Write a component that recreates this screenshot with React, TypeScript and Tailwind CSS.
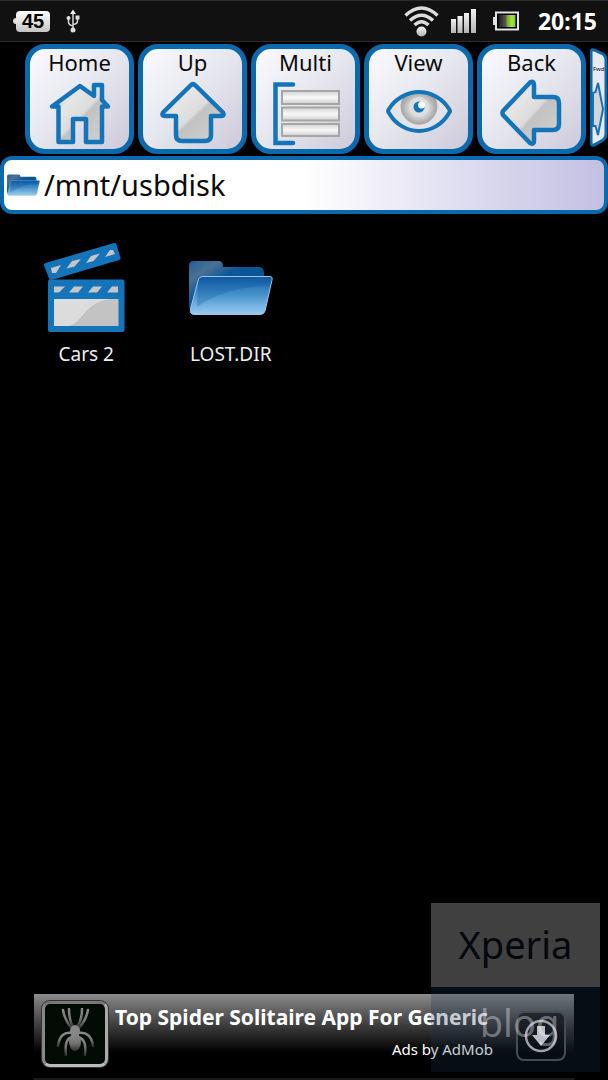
import { ReactNode, useState } from 'react'

interface ToolProps {
  title: string
  icon: ReactNode
}

interface EntryProps {
  name: string
  icon: ReactNode
}

// gradients shared by all icons on the page
function IconDefs() {
  return (
    <svg className="absolute h-0 w-0" aria-hidden="true">
      <defs>
        <linearGradient id="steel" x1="0" y1="0" x2="1" y2="1">
          <stop offset="0" stopColor="#bdbdbd" />
          <stop offset="0.3" stopColor="#e6e6e6" />
          <stop offset="0.52" stopColor="#dcdcdc" />
          <stop offset="0.56" stopColor="#c2c2c2" />
          <stop offset="1" stopColor="#d2d2d4" />
        </linearGradient>
        <linearGradient id="bar" x1="0" y1="0" x2="0" y2="1">
          <stop offset="0" stopColor="#d2d2d2" />
          <stop offset="0.5" stopColor="#f8f8f8" />
          <stop offset="1" stopColor="#cfcfcf" />
        </linearGradient>
        <radialGradient id="iris">
          <stop offset="0" stopColor="#f2f2f2" />
          <stop offset="0.6" stopColor="#d0d0d0" />
          <stop offset="1" stopColor="#a3a3a3" />
        </radialGradient>
        <linearGradient id="folderBack" x1="0" y1="0" x2="1" y2="1">
          <stop offset="0" stopColor="#1f5f9a" />
          <stop offset="0.2" stopColor="#4b7093" />
          <stop offset="0.4" stopColor="#0b5799" />
          <stop offset="1" stopColor="#0a4d8c" />
        </linearGradient>
        <linearGradient id="folderFront" x1="0" y1="0" x2="0" y2="1">
          <stop offset="0" stopColor="#0e5ba3" />
          <stop offset="0.5" stopColor="#4a94cd" />
          <stop offset="1" stopColor="#9accf0" />
        </linearGradient>
        <linearGradient id="silver" x1="0" y1="0" x2="0" y2="1">
          <stop offset="0" stopColor="#f4f4f4" />
          <stop offset="1" stopColor="#b4b4b4" />
        </linearGradient>
        <linearGradient id="charge" x1="0" y1="0" x2="1" y2="0">
          <stop offset="0" stopColor="#1c1c1c" />
          <stop offset="0.45" stopColor="#5a5a5a" />
          <stop offset="0.5" stopColor="#6fae1c" />
          <stop offset="0.8" stopColor="#a5e344" />
          <stop offset="1" stopColor="#7fc222" />
        </linearGradient>
        <linearGradient id="spider" x1="0" y1="0" x2="0" y2="1">
          <stop offset="0" stopColor="#8a8a8a" />
          <stop offset="0.55" stopColor="#757575" />
          <stop offset="1" stopColor="#333" />
        </linearGradient>
      </defs>
    </svg>
  )
}

function HomeIcon() {
  return (
    <svg viewBox="0 0 68 68" className="size-[68px]" fill="url(#steel)" stroke="#1474ba" strokeWidth="4.500" strokeLinejoin="round">
      <path d="M34 7 6 27.500H12.500V63H27V40H40V63H56V27.500H62L56 21V6H48V17Z" />
    </svg>
  )
}

function UpIcon() {
  return (
    <svg viewBox="0 0 68 68" className="size-[68px]" fill="url(#steel)" stroke="#1474ba" strokeWidth="4.500" strokeLinejoin="round">
      <path d="M31.500 6.500Q34 4 36.500 6.500L64 33.500Q66 37 62 37H52V56Q52 62 46 62H23Q17 62 17 56V37H6Q2 37 4 33.500Z" />
    </svg>
  )
}

function MultiIcon() {
  return (
    <svg viewBox="0 0 68 68" className="size-[68px]">
      <path d="M21 5.500H3.500V64H21" fill="none" stroke="#1474ba" strokeWidth="4.500" strokeLinecap="round" />
      <g fill="url(#bar)" stroke="#a6a6a6" strokeWidth="2">
        <rect x="10" y="12" width="57" height="13" />
        <rect x="10" y="28.500" width="57" height="13" />
        <rect x="10" y="45" width="57" height="12" />
      </g>
    </svg>
  )
}

function ViewIcon() {
  return (
    <svg viewBox="0 0 68 68" className="size-[68px]">
      <path d="M4 32C10 21 21 13 34 13S58 21 64 32C58 45 47 52 34 52S10 45 4 32Z" fill="#e4e4e8" />
      <path d="M18 19Q26 13 34 13T50 19A18 18 0 1 1 18 19Z" fill="url(#iris)" stroke="#aaa" />
      <circle cx="34" cy="28" r="10" fill="#dedede" />
      <circle cx="34" cy="28" r="5.500" fill="#1474ba" />
      <circle cx="36.500" cy="26" r="3.500" fill="#fff" />
      <path d="M4 34Q2 32 4 30C10 20 22 13 34 13S58 20 64 30Q66 32 64 34C58 45 46 52 34 52S10 45 4 34Z" fill="none" stroke="#1474ba" strokeWidth="4" />
    </svg>
  )
}

function BackIcon() {
  return (
    <svg viewBox="0 0 68 68" className="size-[68px]" fill="url(#steel)" stroke="#1474ba" strokeWidth="4.500" strokeLinejoin="round">
      <path d="M32 3.500 5 32Q4 34 5 36L32 64Q36 66 36 62V51H55Q61 51 61 45V24Q61 18 55 18H36V6Q36 1 32 3.500Z" />
    </svg>
  )
}

function ClapperIcon() {
  return (
    <svg viewBox="0 0 84 92" className="h-[92px] w-[84px]">
      <g fill="#1474ba" stroke="#1474ba" strokeWidth="4" strokeLinejoin="round">
        <path d="M2 23 70.500 3 74.500 16 7 36Z" />
        <path d="M6 39.500H78.500V88H6Z" />
      </g>
      <g fill="#c6c6c6">
        <path d="M7 26 17 23 12 31H8Z" />
        <path d="M22.500 26.500 28 19 37 17 30.500 24.500Z" />
        <path d="M42 21 47 14 56 11.500 49.500 19Z" />
        <path d="M61 15 66 8H69L71 12Z" />
        <path d="M10 44.500H21L15 50.500H10Z" />
        <path d="M30 44.500H39L34 50.500H25Z" />
        <path d="M49 44.500H58L53 50.500H44Z" />
        <path d="M68 44.500H74V50.500H63Z" />
      </g>
      <rect x="10" y="57" width="64.500" height="27" fill="#c3c3c3" />
      <path d="M10 57H67C41 60 41 77 26 84H10Z" fill="#dcdcdc" />
    </svg>
  )
}

function FolderIcon({ className }: { className: string }) {
  return (
    <svg viewBox="0 0 84 56" className={className}>
      <path d="M0 6Q0 1 5 1H30Q34 1 34 7H70Q75 7 75 13V50H4Q0 50 0 46Z" fill="url(#folderBack)" />
      <path d="M14 16.500H81Q84 16.500 83 20L76 51Q75 54.500 71 54.500H5Q.5 54 1.500 49L9 21Q10 16.500 14 16.500Z" fill="url(#folderFront)" stroke="#9cc6e8" strokeWidth="1" />
      <path d="M14 17H81Q84 17 82.500 21L81 26Q38 26 8 47L9.500 21Q10 17 14 17Z" fill="#084f96" opacity=".25" />
    </svg>
  )
}

function SpiderIcon() {
  return (
    <svg viewBox="0 0 56 52" className="h-[52px] w-[56px]">
      <g fill="none" stroke="url(#spider)" strokeWidth="2.500" strokeLinecap="round">
        <path d="M25 21Q18 13 16 2" />
        <path d="M26 19Q22 12 22 1" />
        <path d="M31 21Q39 13 41 2" />
        <path d="M30 19Q35 12 35 1" />
        <path d="M25 25Q13 23 11 38" />
        <path d="M25 29Q17 31 19 47" />
        <path d="M31 25Q44 23 46 38" />
        <path d="M31 29Q40 31 38 47" />
      </g>
      <ellipse cx="28" cy="23" rx="5" ry="6" fill="#888" />
      <ellipse cx="28" cy="34" rx="6" ry="9" fill="url(#spider)" />
    </svg>
  )
}

function StatusBar() {
  return (
    <header className="flex h-[42px] items-center border-y border-[#2b2b2b] bg-[#111] pr-[11px] pl-[13px]">
      <div className="flex items-center">
        <span className="h-[6px] w-[3px] rounded-l-sm bg-[#ddd]" />
        <span className="flex h-[21px] w-[34px] items-center justify-center rounded-sm bg-linear-to-b from-white to-[#c4c4c4] font-['Liberation_Sans'] text-[20px] font-bold text-black">
          45
        </span>
      </div>
      <svg viewBox="0 0 14 24" className="ml-4 h-6 w-[14px]" fill="none" stroke="#d5d5d5" strokeWidth="1.500">
        <path d="M7 3V20M2.500 9V13Q2.500 16 7 17M11.500 9V12Q11.500 15 7 15.500" />
        <path d="M7 .5 10 5H4Z" fill="#eee" stroke="none" />
        <circle cx="7" cy="21" r="2.500" fill="#ddd" stroke="none" />
        <circle cx="2.500" cy="9" r="2" fill="#ddd" stroke="none" />
        <path d="M9.500 6.500H13.500V10.500H9.500Z" fill="#ddd" stroke="none" />
      </svg>

      <div className="ml-auto flex items-center gap-3">
        <svg viewBox="0 0 35 34" className="h-[34px] w-[35px]" fill="none" stroke="#dcdcdc" strokeWidth="3.500">
          <path d="M1.500 11.500Q17.500-3.500 33.500 11.500" />
          <path d="M6 16.500Q17.500 6 29 16.500" />
          <path d="M10.500 21Q17.500 14.500 24.500 21" />
          <circle cx="17.500" cy="27.500" r="5" fill="url(#silver)" stroke="none" />
        </svg>
        <svg viewBox="0 0 30 26" className="h-[26px] w-[30px]" fill="url(#silver)">
          <rect x="0" y="11" width="5" height="14" />
          <rect x="6.500" y="8" width="5" height="17" />
          <rect x="13" y="5" width="5" height="20" />
          <rect x="20" y="1" width="5" height="24" />
        </svg>
        <svg viewBox="0 0 33 20" className="h-5 w-[33px]">
          <rect x="0" y="6" width="2" height="8" fill="#ddd" />
          <rect x="3" y="1.500" width="22" height="17" fill="#000" stroke="#e4e4e4" strokeWidth="2" />
          <rect x="5.500" y="4" width="17" height="12" fill="url(#charge)" />
        </svg>
        <time className="text-[23px] leading-6 font-bold text-white">20:15</time>
      </div>
    </header>
  )
}

function ToolButton({ title, icon }: ToolProps) {
  return (
    <button
      type="button"
      className="flex h-[110px] w-[109px] shrink-0 flex-col items-center gap-1 rounded-[20px] border-[5px] border-[#0b69ae] bg-linear-to-br from-[#fafaff] via-[#e6e6ee] to-[#cdcada] text-[22px] leading-[26px] text-[#0b0b0b]"
    >
      {title}
      {icon}
    </button>
  )
}

// next tool, seen edge-on while it turns into view
function TurnedTool() {
  return (
    <button type="button" className="relative h-[104px] w-5 shrink-0 text-[6px] leading-3 text-black">
      <svg viewBox="0 0 20 104" className="absolute inset-0 h-[104px] w-5">
        <path d="M1 5Q1 2 4 3L13 7Q16 9 16 14V86Q16 91 13 93L4 98Q1 99 1 95Z" fill="#e9e9f1" stroke="#0b69ae" strokeWidth="3" />
        <path d="M3 46 5.500 45 8 36 13 62 8 88 5.500 79 3 79Z" fill="#d5d5d5" stroke="#1474ba" strokeWidth="2" />
      </svg>
      <span className="absolute top-4 left-[3px]">Fwd</span>
    </button>
  )
}

function Entry({ name, icon }: EntryProps) {
  return (
    <li>
      <button type="button" className="flex w-full flex-col items-center text-[19px] leading-6 text-[#eee]">
        <span className="mb-2 flex h-[92px] items-center">{icon}</span>
        {name}
      </button>
    </li>
  )
}

function AdBanner() {
  return (
    <a
      href="#ad"
      className="mx-auto flex h-[86px] w-full max-w-[540px] items-start border-b-2 border-[#1a1a1a] bg-linear-to-b from-[#8c8c8c] via-[#1c1c1c] via-55% to-black to-80% px-2 pt-[7px] text-white"
    >
      <span className="flex size-[66px] shrink-0 items-center justify-center rounded-lg border-[3px] border-t-[#777] border-r-[#aaa] border-b-[#bbb] border-l-[#888] bg-[#030b05] ring-1 ring-[#333]">
        <SpiderIcon />
      </span>
      <span className="ml-[7px] flex w-[378px] flex-col">
        <span className="text-[21px] leading-8 font-bold whitespace-nowrap">Top Spider Solitaire App For Generic</span>
        <span className="text-right text-[15px] leading-8">Ads by AdMob</span>
      </span>
      <span className="mt-[10px] ml-auto flex size-[50px] shrink-0 items-center justify-center rounded-lg border-2 border-[#555] bg-black/60">
        <svg viewBox="0 0 34 34" className="size-[34px]">
          <circle cx="17" cy="17" r="15" fill="none" stroke="#c9c9c9" strokeWidth="2.500" />
          <path d="M13 7H21V16H26L17 27 8 16H13Z" fill="#ececec" />
        </svg>
      </span>
    </a>
  )
}

export default function App() {
  const [path, setPath] = useState('/mnt/usbdisk')

  const tools: ToolProps[] = [
    { title: 'Home', icon: <HomeIcon /> },
    { title: 'Up', icon: <UpIcon /> },
    { title: 'Multi', icon: <MultiIcon /> },
    { title: 'View', icon: <ViewIcon /> },
    { title: 'Back', icon: <BackIcon /> }
  ]

  const entries: EntryProps[] = [
    { name: 'Cars 2', icon: <ClapperIcon /> },
    { name: 'LOST.DIR', icon: <FolderIcon className="h-14 w-[84px]" /> }
  ]

  return (
    <div className="relative flex min-h-screen flex-col overflow-hidden bg-black font-['Noto_Sans',sans-serif]">
      <IconDefs />
      <StatusBar />

      <nav className="flex items-center gap-1 overflow-hidden py-[2px] pl-[25px]">
        {tools.map((tool) => (
          <ToolButton key={tool.title} {...tool} />
        ))}
        <TurnedTool />
      </nav>

      <label className="flex h-[58px] items-center gap-1 rounded-xl border-4 border-[#0b69ae] bg-linear-to-r from-white from-50% to-[#c3c0e2] pl-[3px]">
        <FolderIcon className="h-[22px] w-[33px] shrink-0" />
        <input
          aria-label="Path"
          type="text"
          value={path}
          onChange={(e) => setPath(e.target.value)}
          className="min-w-0 flex-1 bg-transparent text-[29px] leading-10 text-[#0b0b0b] outline-none"
        />
      </label>

      <main className="flex-1 pt-7 pr-4 pl-[14px]">
        <ul className="grid grid-cols-4">
          {entries.map((entry) => (
            <Entry key={entry.name} {...entry} />
          ))}
        </ul>
      </main>

      <AdBanner />

      <div className="pointer-events-none absolute right-2 bottom-2 w-[169px] text-center text-[38px]">
        <p className="h-[84px] bg-[#404040] leading-[82px] text-[#04080d]">Xperia</p>
        <p className="h-[85px] bg-[#1c3350]/25 pl-2 leading-[70px] text-white/35">blog</p>
      </div>
    </div>
  )
}
